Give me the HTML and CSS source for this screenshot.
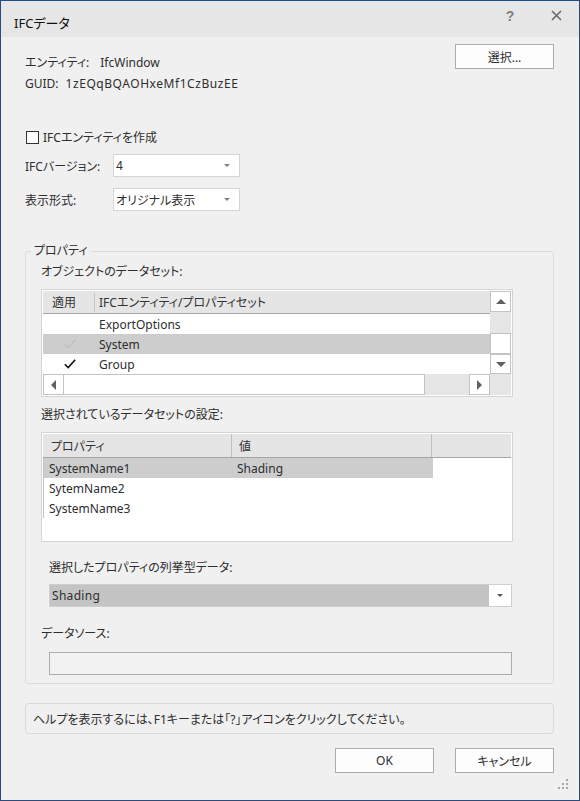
FILE: index.html
```html
<!DOCTYPE html>
<html lang="ja">
<head>
<meta charset="utf-8">
<title>IFCデータ</title>
<link rel="stylesheet" href="styles.css">
</head>
<body>
<div class="window">
  <div class="titlebar">
    <span class="title">IFCデータ</span>
    <div class="controls">
      <span class="ctl help">?</span>
      <span class="ctl">
        <svg width="11" height="11" viewBox="0 0 11 11"><path d="M1 1 L10 10 M10 1 L1 10" stroke="#6a6a6a" stroke-width="1.6" fill="none"/></svg>
      </span>
    </div>
  </div>
  <div class="content">
    <div class="top">
      <div class="info">
        <div><span>エンティティ:</span><span class="val1">IfcWindow</span></div>
        <div><span>GUID:</span><span class="val2">1zEQqBQAOHxeMf1CzBuzEE</span></div>
      </div>
      <button class="btn">選択...</button>
    </div>

    <div class="check"><span class="box"></span><span>IFCエンティティを作成</span></div>

    <div class="field"><span class="flabel">IFCバージョン:</span><div class="select"><span>4</span><span class="caret"></span></div></div>
    <div class="field field2"><span class="flabel">表示形式:</span><div class="select"><span>オリジナル表示</span><span class="caret"></span></div></div>

    <fieldset class="group">
      <legend>プロパティ</legend>
      <div class="lbl lbl1">オブジェクトのデータセット:</div>
      <div class="list1">
        <div class="lv-main">
          <div class="lv-head">
            <span class="c1 hsep">適用</span>
            <span class="c2">IFCエンティティ/プロパティセット</span>
          </div>
          <div class="lv-row"><span class="c1"></span><span class="c2">ExportOptions</span></div>
          <div class="lv-row sel"><span class="c1">
            <svg width="12" height="10" viewBox="0 0 12 10"><path d="M0.8 5.2 L4.2 8.6 L11.2 0.8" stroke="#b4b4b4" stroke-width="1" fill="none"/></svg>
          </span><span class="c2">System</span></div>
          <div class="lv-row"><span class="c1">
            <svg width="12" height="10" viewBox="0 0 12 10"><path d="M0.8 5.2 L4.2 8.6 L11.2 0.8" stroke="#111" stroke-width="1.6" fill="none"/></svg>
          </span><span class="c2">Group</span></div>
        </div>
        <div class="vscroll">
          <div class="sbtn"><span class="tri-up"></span></div>
          <div class="strack"></div>
          <div class="sbtn"></div>
          <div class="sbtn"><span class="tri-down"></span></div>
        </div>
        <div class="hscroll">
          <div class="sbtn hb"><span class="tri-left"></span></div>
          <div class="hthumb"></div>
          <div class="htrack"></div>
          <div class="sbtn hb"><span class="tri-right"></span></div>
        </div>
        <div class="corner"></div>
      </div>

      <div class="lbl lbl2">選択されているデータセットの設定:</div>
      <div class="list2">
        <div class="l2-head">
          <span class="h1">プロパティ</span>
          <span class="h2">値</span>
          <span class="h3"></span>
        </div>
        <div class="l2-row sel"><span class="d1">SystemName1</span><span class="d2">Shading</span></div>
        <div class="l2-row"><span class="d1">SytemName2</span><span class="d2"></span></div>
        <div class="l2-row"><span class="d1">SystemName3</span><span class="d2"></span></div>
      </div>

      <div class="lbl lbl3">選択したプロパティの列挙型データ:</div>
      <div class="combo">
        <span class="cval">Shading</span>
        <span class="carea"><span class="caret dark"></span></span>
      </div>

      <div class="lbl lbl4">データソース:</div>
      <div class="tbox"></div>
    </fieldset>

    <div class="helpbar">ヘルプを表示するには、F1キーまたは「?」アイコンをクリックしてください。</div>

    <div class="actions">
      <button class="btn">OK</button>
      <button class="btn">キャンセル</button>
    </div>
  </div>
  <svg class="grip" width="10" height="10" viewBox="0 0 10 10">
    <rect x="8" y="0" width="2" height="2" fill="#a8a8a8"/>
    <rect x="4" y="4" width="2" height="2" fill="#a8a8a8"/>
    <rect x="8" y="4" width="2" height="2" fill="#a8a8a8"/>
    <rect x="0" y="8" width="2" height="2" fill="#a8a8a8"/>
    <rect x="4" y="8" width="2" height="2" fill="#a8a8a8"/>
    <rect x="8" y="8" width="2" height="2" fill="#a8a8a8"/>
  </svg>
</div>
</body>
</html>
```
FILE: styles.css
```css
* { box-sizing: border-box; }
html, body { margin: 0; padding: 0; }
body {
  font-family: "Noto Sans", "Noto Sans CJK JP", sans-serif;
  font-size: 12px;
  color: #2e2e2e;
  font-feature-settings: "palt";
  background: #f0f0f0;
}
.window {
  width: 580px;
  height: 801px;
  border: 1px solid #2a4b7c;
  background: #f0f0f0;
  display: flex;
  flex-direction: column;
  position: relative;
}
.titlebar {
  height: 36px;
  flex-shrink: 0;
  background: #e6e6e6;
  display: flex;
  justify-content: space-between;
  align-items: flex-start;
}
.title {
  font-size: 13px;
  line-height: 20px;
  margin: 12px 0 0 13px;
  color: #111;
}
.controls { display: flex; }
.ctl {
  width: 46px;
  height: 29px;
  display: flex;
  align-items: center;
  justify-content: center;
}
.help {
  font-family: "Liberation Sans", sans-serif;
  font-weight: bold;
  font-size: 14px;
  color: #808080;
}
.content {
  padding: 0 25px 0 24px;
  display: flex;
  flex-direction: column;
}
.top {
  display: flex;
  justify-content: space-between;
  align-items: flex-start;
  margin-top: 7px;
}
.info { margin-top: 8px; line-height: 21px; }
.val1 { margin-left: 11px; }
.val2 { margin-left: 7px; letter-spacing: 0.55px; }
.btn {
  width: 99px;
  height: 25px;
  border: 1px solid #adadad;
  background: #fdfdfd;
  font: inherit;
  color: #2e2e2e;
  padding: 0;
}
.check {
  display: flex;
  align-items: center;
  height: 20px;
  margin-top: 33px;
}
.box {
  width: 13px;
  height: 13px;
  border: 1px solid #333;
  background: #fff;
  margin: 0 4px 0 1px;
}
.field {
  display: flex;
  align-items: center;
  height: 23px;
  margin-top: 7px;
}
.field2 { margin-top: 11px; }
.flabel { width: 88px; }
.select {
  width: 127px;
  height: 23px;
  background: #fff;
  border: 1px solid #d5d5d5;
  display: flex;
  align-items: center;
  justify-content: space-between;
  padding: 0 9px 0 2px;
}
.caret {
  width: 0;
  height: 0;
  border-left: 3px solid transparent;
  border-right: 3px solid transparent;
  border-top: 3px solid #808080;
}
.caret.dark { border-top-color: #555; }

.group {
  margin: 32px 0 0 0;
  padding: 0 40px 8px 15px;
  border: 1px solid #dcdcdc;
  border-radius: 3px;
  min-width: 0;
}
.group legend {
  padding: 0 3px;
  margin-left: -10px;
  line-height: 16px;
}
.lbl { line-height: 20px; }
.lbl1 { margin-top: 3px; }
.lbl2 { margin-top: 8px; }
.lbl3 { margin-top: 16px; margin-left: 8px; }
.lbl4 { margin-top: 17px; }

.list1 {
  margin-top: 7px;
  width: 472px;
  height: 108px;
  border: 1px solid #d4d4d4;
  background: #fff;
  padding: 1px;
  display: grid;
  grid-template-columns: 447px 21px;
  grid-template-rows: 83px 21px;
}
.lv-head {
  height: 23px;
  background: #e5e5e5;
  border-bottom: 1px solid #a5a5a5;
  display: flex;
  align-items: center;
  color: #333;
}
.lv-head .c1 { padding-left: 9px; }
.hsep { border-right: 1px solid #c6c6c6; height: 19px; line-height: 19px; }
.lv-head .c2 { padding-left: 4px; }
.c1 {
  width: 52px;
  flex-shrink: 0;
  display: flex;
  align-items: center;
  justify-content: center;
}
.lv-head .c1 { justify-content: flex-start; }
.lv-row {
  height: 20px;
  display: flex;
  align-items: center;
}
.lv-row .c2 { padding-left: 4px; }
.lv-row .c1 svg { margin-left: 1px; }
.sel { background: #cdcdcd; }

.vscroll {
  display: flex;
  flex-direction: column;
  background: #e6e6e6;
}
.sbtn {
  width: 21px;
  height: 21px;
  background: #fff;
  border: 1px solid #c3c3c3;
  display: flex;
  align-items: center;
  justify-content: center;
  flex-shrink: 0;
}
.vscroll .sbtn:last-child { height: 20px; }
.strack { height: 21px; flex-shrink: 0; }
.tri-up {
  width: 0; height: 0;
  border-left: 5px solid transparent;
  border-right: 5px solid transparent;
  border-bottom: 5px solid #606060;
}
.tri-down {
  width: 0; height: 0;
  border-left: 5px solid transparent;
  border-right: 5px solid transparent;
  border-top: 5px solid #606060;
}
.tri-left {
  width: 0; height: 0;
  border-top: 5px solid transparent;
  border-bottom: 5px solid transparent;
  border-right: 5px solid #606060;
}
.tri-right {
  width: 0; height: 0;
  border-top: 5px solid transparent;
  border-bottom: 5px solid transparent;
  border-left: 5px solid #606060;
}
.hscroll {
  display: flex;
  background: #e6e6e6;
}
.hthumb {
  width: 361px;
  height: 21px;
  background: #fff;
  border: 1px solid #c3c3c3;
  border-left: none;
}
.htrack { flex: 1; }
.corner { background: #e6e6e6; }

.list2 {
  margin-top: 7px;
  width: 472px;
  height: 110px;
  border: 1px solid #d4d4d4;
  background: #fff;
  padding: 1px;
}
.l2-head {
  height: 24px;
  background: #e5e5e5;
  border-bottom: 1px solid #a5a5a5;
  display: flex;
  align-items: stretch;
  color: #333;
}
.l2-head span { display: flex; align-items: center; }
.h1 { width: 189px; padding-left: 8px; border-right: 1px solid #c0c0c0; }
.h2 { width: 200px; padding-left: 7px; border-right: 1px solid #c0c0c0; }
.h3 { flex: 1; }
.l2-row {
  width: 390px;
  height: 20px;
  display: flex;
  align-items: center;
  border-left: 1px solid #c4c4c4;
}
.d1 { width: 188px; padding-left: 5px; }
.d2 { padding-left: 5px; }

.combo {
  margin: 6px 0 0 8px;
  width: 463px;
  height: 23px;
  border: 1px solid #cfcfcf;
  background: #fff;
  display: flex;
}
.cval {
  flex: 1;
  background: #c4c4c4;
  padding-left: 2px;
  display: flex;
  align-items: center;
  letter-spacing: 0.3px;
}
.carea {
  width: 22px;
  display: flex;
  align-items: center;
  justify-content: center;
}
.tbox {
  margin: 8px 0 0 8px;
  width: 463px;
  height: 23px;
  border: 1px solid #adadad;
  background: #f2f2f2;
}
.helpbar {
  margin-top: 19px;
  height: 31px;
  border: 1px solid #d9d9d9;
  border-radius: 4px;
  padding-left: 7px;
  display: flex;
  align-items: center;
}
.actions {
  margin-top: 14px;
  display: flex;
  justify-content: flex-end;
  gap: 21px;
}
.grip {
  position: absolute;
  right: 11px;
  bottom: 11px;
}
```
